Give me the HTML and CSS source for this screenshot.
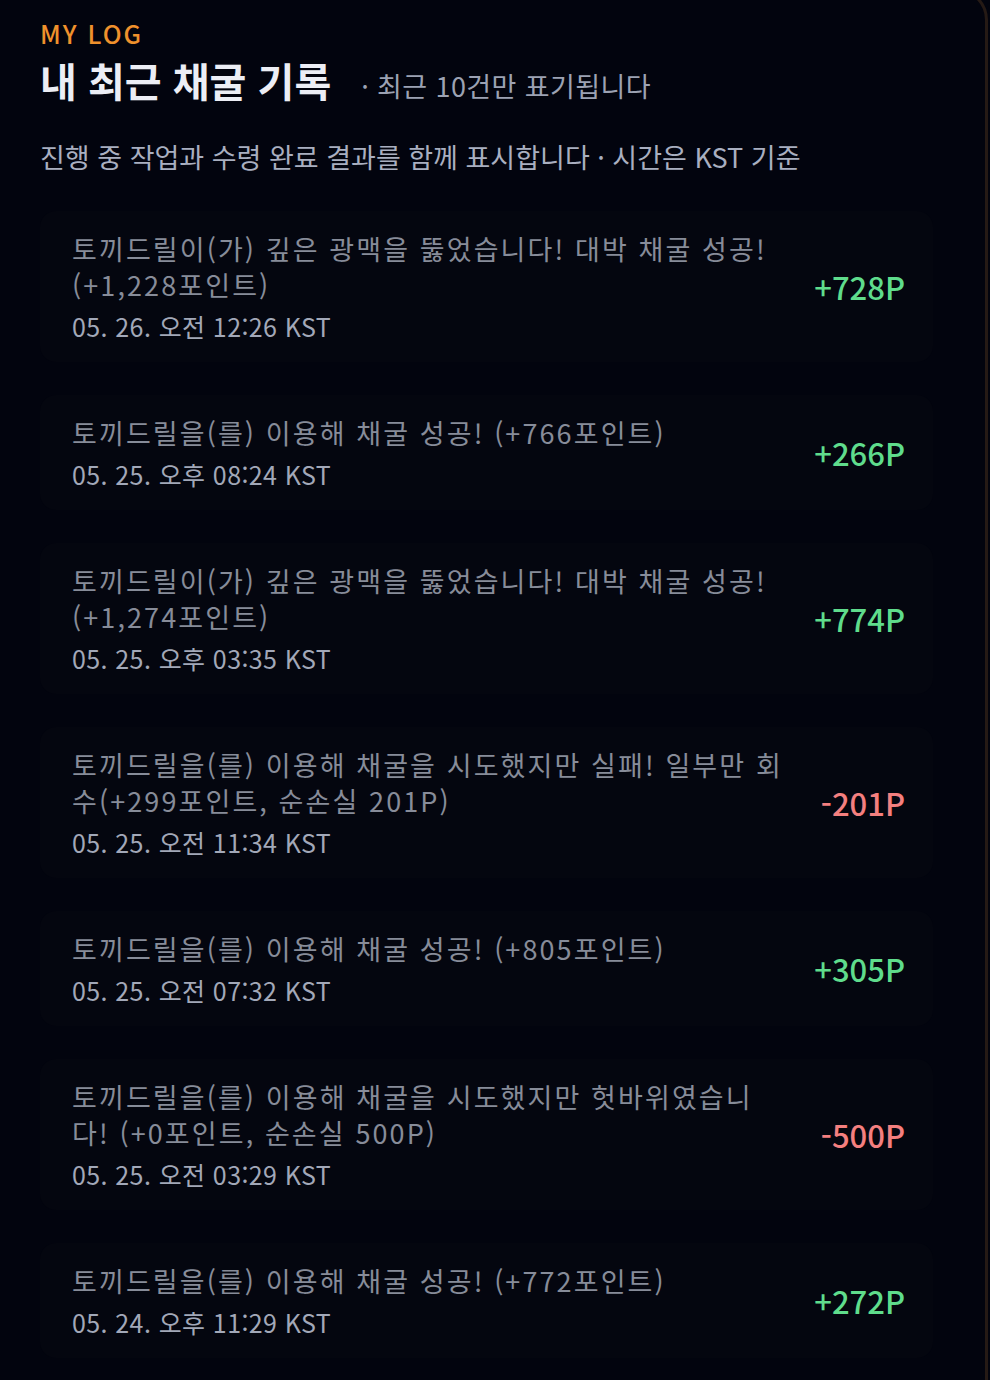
FILE: index.html
```html
<!DOCTYPE html>
<html lang="ko">
<head>
<meta charset="utf-8">
<title>MY LOG</title>
<link rel="stylesheet" href="styles.css">
</head>
<body>
<section class="panel">
  <header class="head">
    <div class="eyebrow">MY LOG</div>
    <div class="title-row">
      <h1 class="title">내 최근 채굴 기록</h1>
      <span class="note">· 최근 10건만 표기됩니다</span>
    </div>
    <p class="desc">진행 중 작업과 수령 완료 결과를 함께 표시합니다 · 시간은 KST 기준</p>
  </header>
  <ul class="list">
    <li class="row">
      <div class="info">
        <div class="msg">토끼드릴이(가) 깊은 광맥을 뚫었습니다! 대박 채굴 성공! (+1,228포인트)</div>
        <div class="time">05. 26. 오전 12:26 KST</div>
      </div>
      <div class="amount plus">+728P</div>
    </li>
    <li class="row">
      <div class="info">
        <div class="msg">토끼드릴을(를) 이용해 채굴 성공! (+766포인트)</div>
        <div class="time">05. 25. 오후 08:24 KST</div>
      </div>
      <div class="amount plus">+266P</div>
    </li>
    <li class="row">
      <div class="info">
        <div class="msg">토끼드릴이(가) 깊은 광맥을 뚫었습니다! 대박 채굴 성공! (+1,274포인트)</div>
        <div class="time">05. 25. 오후 03:35 KST</div>
      </div>
      <div class="amount plus">+774P</div>
    </li>
    <li class="row">
      <div class="info">
        <div class="msg">토끼드릴을(를) 이용해 채굴을 시도했지만 실패! 일부만 회수(+299포인트, 순손실 201P)</div>
        <div class="time">05. 25. 오전 11:34 KST</div>
      </div>
      <div class="amount minus">-201P</div>
    </li>
    <li class="row">
      <div class="info">
        <div class="msg">토끼드릴을(를) 이용해 채굴 성공! (+805포인트)</div>
        <div class="time">05. 25. 오전 07:32 KST</div>
      </div>
      <div class="amount plus">+305P</div>
    </li>
    <li class="row">
      <div class="info">
        <div class="msg">토끼드릴을(를) 이용해 채굴을 시도했지만 헛바위였습니다! (+0포인트, 순손실 500P)</div>
        <div class="time">05. 25. 오전 03:29 KST</div>
      </div>
      <div class="amount minus">-500P</div>
    </li>
    <li class="row">
      <div class="info">
        <div class="msg">토끼드릴을(를) 이용해 채굴 성공! (+772포인트)</div>
        <div class="time">05. 24. 오후 11:29 KST</div>
      </div>
      <div class="amount plus">+272P</div>
    </li>
  </ul>
</section>
</body>
</html>
```
FILE: styles.css
```css
html, body {
  margin: 0;
  padding: 0;
  background: #02040e;
  overflow: hidden;
}
body {
  font-family: "Noto Sans CJK KR", "Noto Sans", sans-serif;
  color: #e9ebf3;
}
.panel {
  margin: -12px 2px 0 -12px;
  border: 3px solid #251a15;
  border-radius: 0 32px 0 0;
  padding: 26px 52px 40px 49px;
  min-height: 1400px;
  box-sizing: border-box;
}
.eyebrow {
  font-size: 25px;
  line-height: 32px;
  letter-spacing: 2px;
  font-weight: 500;
  color: #ef912c;
}
.title-row {
  display: flex;
  align-items: baseline;
  gap: 30px;
  margin-top: 7px;
}
.title {
  margin: 0;
  font-size: 40px;
  line-height: 48px;
  font-weight: 700;
  color: #eceef5;
}
.note {
  font-size: 27px;
  color: #9ca2b3;
  letter-spacing: 0.4px;
}
.desc {
  margin: 34px 0 0;
  font-size: 27px;
  line-height: 36px;
  color: #a9afc0;
}
.list {
  list-style: none;
  margin: 36px 0 0;
  padding: 0;
  display: flex;
  flex-direction: column;
  gap: 33px;
}
.row {
  display: flex;
  align-items: center;
  gap: 20px;
  padding: 20px 28px 21px 32px;
  border-radius: 16px;
  background: #04060f;
}
.info {
  flex: 1;
  min-width: 0;
}
.msg {
  font-size: 27px;
  line-height: 36px;
  letter-spacing: 2.1px;
  color: #878c99;
}
.time {
  margin-top: 8px;
  font-size: 25px;
  line-height: 30px;
  letter-spacing: 0.4px;
  color: #a2a8b8;
}
.amount {
  width: 100px;
  text-align: right;
  font-size: 31px;
  font-weight: 500;
}
.plus { color: #5fdc8c; }
.minus { color: #f47f7f; }
```
